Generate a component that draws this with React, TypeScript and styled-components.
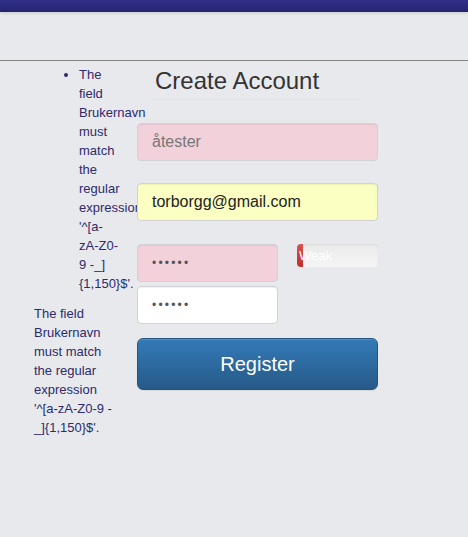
import React from 'react';
import styled, { createGlobalStyle } from 'styled-components';

const GlobalStyle = createGlobalStyle`
  html, body {
    margin: 0;
    padding: 0;
    background: #e8e9ed;
    font-family: "Liberation Sans", Arial, sans-serif;
  }
`;

const Page = styled.div`
  width: 468px;
  height: 537px;
  overflow: hidden;
  background: #e8e9ed;
`;

const TopBar = styled.div`
  height: 12px;
  background: linear-gradient(to bottom, #312f8a, #25246f);
  box-shadow: 0 1px 3px rgba(0, 0, 0, 0.15);
`;

const NavArea = styled.div`
  height: 48px;
  border-bottom: 1px solid #858585;
`;

const Main = styled.div`
  display: flex;
  align-items: flex-start;
`;

const LeftColumn = styled.div`
  width: 137px;
  flex-shrink: 0;
  color: #2d2b6c;
  font-size: 13px;
  line-height: 19px;
`;

const ErrorList = styled.ul`
  margin: 4px 0 0;
  padding-left: 79px;
`;

const ErrorItem = styled.li`
  width: 41px;
`;

const ErrorText = styled.p`
  margin: 11px 0 0 34px;
  width: 88px;
`;

const FormColumn = styled.form`
  width: 241px;
  display: flex;
  flex-direction: column;
`;

const Title = styled.h2`
  margin: 7px 18px 0 13px;
  padding: 0 0 5px 5px;
  font-size: 24px;
  font-weight: 400;
  line-height: 26px;
  color: #333;
  border-bottom: 1px solid #e2e3e7;
`;

const Field = styled.input<{ $tone: 'error' | 'autofill' | 'plain' }>`
  position: relative;
  display: block;
  box-sizing: border-box;
  height: 38px;
  width: 100%;
  margin: 0;
  padding: 0 14px;
  border: 1px solid #d2d2d6;
  border-radius: 4px;
  font-family: "Liberation Sans", Arial, sans-serif;
  font-size: 16px;
  outline: none;
  background: ${p => (p.$tone === 'error' ? '#f2d1db' : p.$tone === 'autofill' ? '#fbffc1' : '#ffffff')};
  color: ${p => (p.$tone === 'error' ? '#777' : '#222')};
  box-shadow: inset 0 1px 1px rgba(0, 0, 0, 0.06);
`;

const Gap = styled.div<{ $h: number }>`
  height: ${p => p.$h}px;
  flex-shrink: 0;
`;

const PasswordRow = styled.div`
  display: flex;
  align-items: flex-start;
  gap: 19px;
`;

const PasswordField = styled(Field)`
  width: 141px;
  font-size: 12px;
  letter-spacing: 2.2px;
  color: #555;
`;

const Meter = styled.div`
  width: 81px;
  height: 23px;
  border-radius: 4px;
  background: linear-gradient(to bottom, #ebebeb, #f5f5f5);
  box-shadow: inset 0 1px 2px rgba(0, 0, 0, 0.08);
  display: flex;
`;

const MeterBar = styled.div<{ $pct: number }>`
  width: ${p => p.$pct}%;
  height: 100%;
  border-radius: 4px 0 0 4px;
  background: linear-gradient(to bottom, #d9534f, #c12e2a);
  color: #fff;
  font-size: 13px;
  line-height: 23px;
  white-space: nowrap;
  text-indent: 2px;
`;

const RegisterButton = styled.button`
  height: 52px;
  width: 100%;
  border: 1px solid #245580;
  border-radius: 6px;
  background: linear-gradient(to bottom, #337ab7, #265a88);
  color: #fff;
  font-family: "Liberation Sans", Arial, sans-serif;
  font-size: 20px;
  cursor: pointer;
  box-shadow: inset 0 1px 0 rgba(255, 255, 255, 0.15), 0 1px 1px rgba(0, 0, 0, 0.075);
`;

const message = "The field Brukernavn must match the regular expression '^[a-zA-Z0-9 -_]{1,150}$'.";

export default function App() {
  return (
    <Page>
      <GlobalStyle />
      <TopBar />
      <NavArea />
      <Main>
        <LeftColumn>
          <ErrorList>
            <ErrorItem>{message}</ErrorItem>
          </ErrorList>
          <ErrorText>{message}</ErrorText>
        </LeftColumn>
        <FormColumn onSubmit={e => e.preventDefault()}>
          <Title>Create Account</Title>
          <Gap $h={23} />
          <Field $tone="error" type="text" value="åtester" readOnly />
          <Gap $h={22} />
          <Field $tone="autofill" type="email" value="torborgg@gmail.com" readOnly />
          <Gap $h={23} />
          <PasswordRow>
            <PasswordField $tone="error" type="password" value="123456" readOnly />
            <Meter>
              <MeterBar $pct={7}>Weak</MeterBar>
            </Meter>
          </PasswordRow>
          <Gap $h={4} />
          <PasswordField $tone="plain" type="password" value="123456" readOnly />
          <Gap $h={14} />
          <RegisterButton type="submit">Register</RegisterButton>
        </FormColumn>
      </Main>
    </Page>
  );
}
